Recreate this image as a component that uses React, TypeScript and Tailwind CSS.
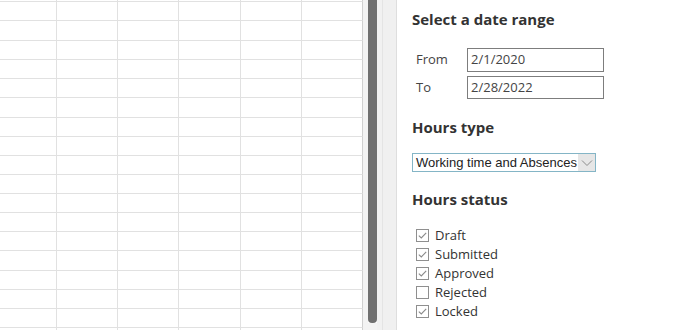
import React from "react";

// grid line positions in the sheet area (row heights alternate 19/20)
const rowHeights = [2, 19, 20, 19, 19, 19, 20, 19, 19, 19, 19, 19, 19, 19, 20, 19, 19, 19, 19];
const colWidths = [57, 61, 61, 62, 61, 61];

const statuses = [
  { label: "Draft", checked: true },
  { label: "Submitted", checked: true },
  { label: "Approved", checked: true },
  { label: "Rejected", checked: false },
  { label: "Locked", checked: true },
];

function Sheet() {
  return (
    <div className="w-[363px] h-full overflow-hidden bg-white">
      {rowHeights.map((h, r) => (
        <div key={r} className={`flex ${h === 2 ? "h-[2px]" : h === 20 ? "h-[20px]" : "h-[19px]"}`}>
          {colWidths.map((w, c) => (
            <div
              key={c}
              className={`border-r border-b border-[#e1e1e1] ${
                w === 57 ? "w-[57px]" : w === 62 ? "w-[62px]" : "w-[61px]"
              } ${c === colWidths.length - 1 ? "border-r-[#d0d0d0]" : ""}`}
            />
          ))}
        </div>
      ))}
    </div>
  );
}

function Scrollbar() {
  return (
    <div className="w-[34px] h-full flex shrink-0">
      <div className="w-[5px] bg-[#f3f3f3]" />
      <div className="w-[9px] h-full flex flex-col">
        <div className="h-[323px] bg-[#707070] rounded-b-[4px]" />
        <div className="flex-1 bg-[#f3f3f3]" />
      </div>
      <div className="w-[6px] bg-[#f1f1f1] border-r border-[#e4e4e4]" />
      <div className="flex-1 bg-[#f0f0f0] border-r border-[#dedede]" />
    </div>
  );
}

function CheckBox({ checked }: { checked: boolean }) {
  return (
    <span className="w-[13px] h-[13px] border border-[#8f8f8f] bg-white flex items-center justify-center">
      {checked && (
        <svg width="11" height="11" viewBox="0 0 11 11">
          <polyline points="1.8,5.6 4.3,8 9.2,2.8" fill="none" stroke="#8a8a8a" strokeWidth="1.1" />
        </svg>
      )}
    </span>
  );
}

function Panel() {
  return (
    <div className="flex-1 bg-white pl-[15px] pt-[8px] text-[#333] font-['Open_Sans','Noto_Sans',sans-serif]">
      <h2 className="text-[15px] leading-[22px] font-bold text-[#333]">Select a date range</h2>

      <div className="mt-[18px] flex flex-col gap-[4px]">
        <div className="flex items-center">
          <span className="w-[55px] pl-[4px] text-[13px] text-[#444]">From</span>
          <div className="w-[137px] h-[24px] border border-[#7d7d7d] px-[3px] flex items-center text-[13px] text-[#444]">
            2/1/2020
          </div>
        </div>
        <div className="flex items-center">
          <span className="w-[55px] pl-[4px] text-[13px] text-[#444]">To</span>
          <div className="w-[137px] h-[23px] border border-[#7d7d7d] px-[3px] flex items-center text-[13px] text-[#444]">
            2/28/2022
          </div>
        </div>
      </div>

      <h2 className="mt-[17px] text-[15px] leading-[22px] font-bold text-[#333]">Hours type</h2>

      <div className="mt-[15px] w-[184px] h-[19px] border border-[#84b5c6] flex items-center font-['Liberation_Sans',Arial,sans-serif]">
        <span className="flex-1 pl-[3px] text-[13px] leading-none text-[#222] whitespace-nowrap">
          Working time and Absences
        </span>
        <span className="w-[17px] h-full bg-[#e6e6e6] flex items-center justify-center">
          <svg width="12" height="8" viewBox="0 0 12 8">
            <polyline points="1,1.5 6,6.5 11,1.5" fill="none" stroke="#8b8b8b" strokeWidth="1" />
          </svg>
        </span>
      </div>

      <h2 className="mt-[16px] text-[15px] leading-[22px] font-bold text-[#333]">Hours status</h2>

      <div className="mt-[16px] flex flex-col pl-[4px]">
        {statuses.map((s) => (
          <label key={s.label} className="h-[19px] flex items-center gap-[6px] text-[13px] text-[#333]">
            <CheckBox checked={s.checked} />
            <span>{s.label}</span>
          </label>
        ))}
      </div>
    </div>
  );
}

export default function App() {
  return (
    <div className="w-[700px] h-[330px] flex overflow-hidden bg-white">
      <Sheet />
      <Scrollbar />
      <Panel />
    </div>
  );
}
